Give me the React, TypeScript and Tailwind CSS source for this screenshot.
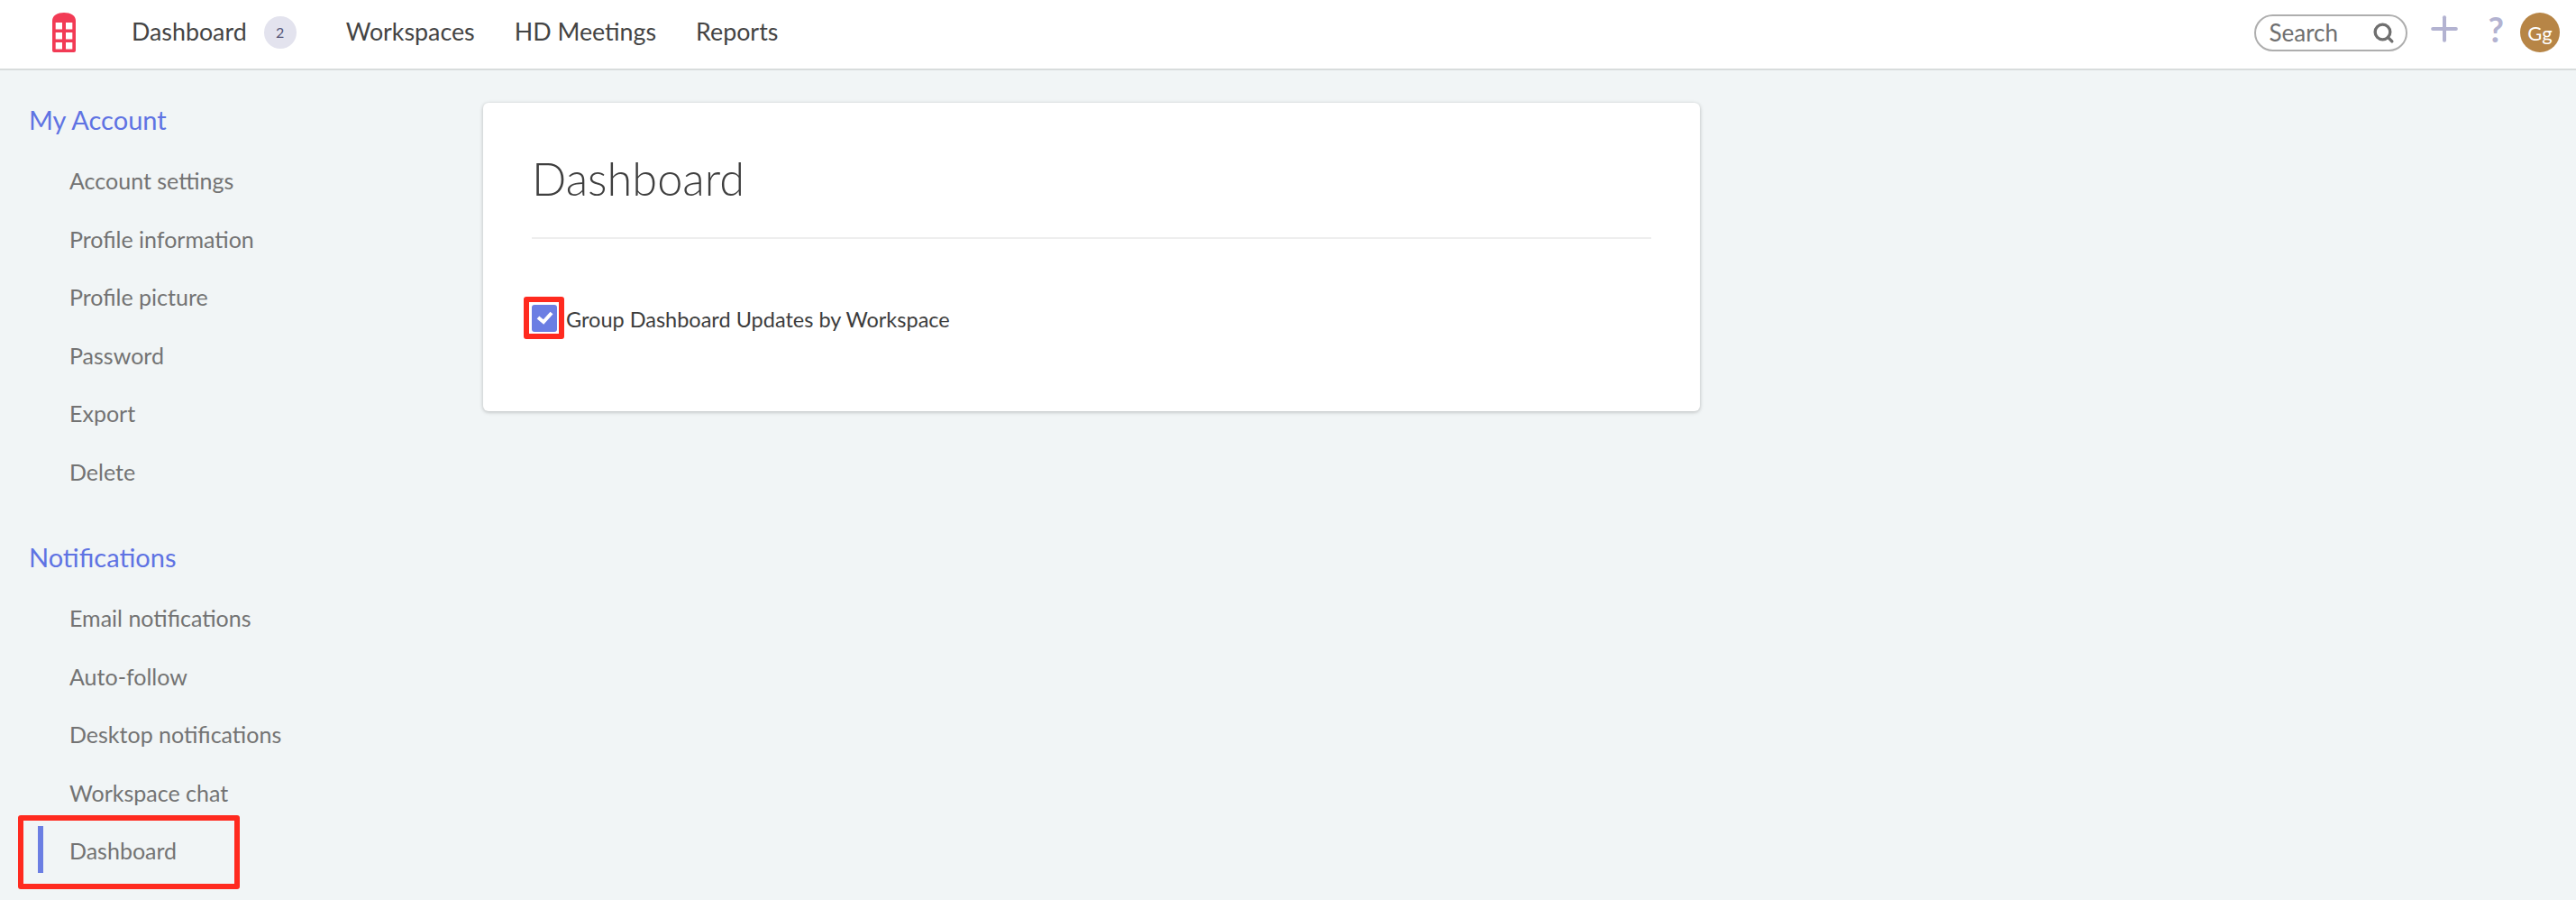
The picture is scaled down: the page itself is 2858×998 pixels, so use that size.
import { Plus, Search } from 'lucide-react';

const sections = [
  {
    title: 'My Account',
    items: ['Account settings', 'Profile information', 'Profile picture', 'Password', 'Export', 'Delete'],
  },
  {
    title: 'Notifications',
    items: ['Email notifications', 'Auto-follow', 'Desktop notifications', 'Workspace chat', 'Dashboard'],
  },
];

// Lato's discretionary set also joins "ct" and "ch", which the design doesn't do
const ligatureClass = (text: string) => (/c[th]/.test(text) ? '' : "[font-feature-settings:'dlig']");

function Logo() {
  return (
    <svg width="26" height="44" viewBox="0 0 26 44" className="block">
      <path d="M0 9C0 3 6 0 13 0s13 3 13 9v33a2 2 0 0 1-2 2H2a2 2 0 0 1-2-2Z" fill="#f23b55" />
      <g fill="#fff">
        <rect x="3.7" y="11" width="7.3" height="7.5" />
        <rect x="15" y="11" width="7.3" height="7.5" />
        <rect x="3.7" y="22" width="7.3" height="7.5" />
        <rect x="15" y="22" width="7.3" height="7.5" />
        <rect x="3.7" y="33" width="7.3" height="7.5" />
        <rect x="15" y="33" width="7.3" height="7.5" />
      </g>
    </svg>
  );
}

function TopBar() {
  return (
    <header className="flex h-[78px] items-center border-b-2 border-[#d8dcdc] bg-white pb-1 text-[26.8px] text-[#444]">
      <div className="ml-[58px] w-[88px]">
        <Logo />
      </div>
      <nav className="flex items-center">
        <span className="-translate-y-[1px]">Dashboard</span>
        <span className="ml-[19px] flex h-9 w-9 items-center justify-center rounded-full bg-[#e3e3ee] text-base text-[#555577]">
          2
        </span>
        <span className="ml-[55px] -translate-y-[1px]">Workspaces</span>
        <span className="ml-[44px] -translate-y-[1px] [font-feature-settings:'dlig']">HD Meetings</span>
        <span className="ml-[44px] -translate-y-[1px]">Reports</span>
      </nav>
      <div className="ml-auto flex items-center pr-[18px]">
        <div className="flex h-[41px] w-[170px] items-center justify-between rounded-full border-2 border-[#aeaeae] pl-[15px] pr-[12px] text-[26px] text-[#6f6f6f]">
          <span>Search</span>
          <Search size={25} strokeWidth={3.2} className="text-[#6f6f6f]" />
        </div>
        <Plus size={44} strokeWidth={2.2} className="ml-[19px] -translate-y-1 text-[#b3b3d1]" />
        <span className="ml-[27px] -translate-y-1 text-[38px] font-bold leading-none text-[#b3b3d1]">?</span>
        <div className="ml-[18px] flex h-11 w-11 items-center justify-center rounded-full bg-[#b78546] text-[22px] text-white">
          Gg
        </div>
      </div>
    </header>
  );
}

function Sidebar() {
  return (
    <aside className="w-[536px] shrink-0 pt-[32px]">
      {sections.map((section) => (
        <section key={section.title} className="mb-[40px]">
          <h2 className="pl-8 text-[29px] leading-[46px] text-[#5f73e3]">{section.title}</h2>
          <ul className="mt-[12px]">
            {section.items.map((item) => {
              const active = section.title === 'Notifications' && item === 'Dashboard';
              return (
                <li
                  key={item}
                  className={`relative h-[64.5px] pl-[77px] text-[25px] leading-[64.5px] text-[#737373] ${ligatureClass(item)}`}
                >
                  {active && (
                    <>
                      <span className="absolute left-[42px] top-[5px] h-[52px] w-[6px] bg-[#6b7ee3]" />
                      <span className="absolute left-[20px] top-[-7px] h-[82px] w-[246px] rounded-[3px] border-[6px] border-[#ff2a1f]" />
                    </>
                  )}
                  {item}
                </li>
              );
            })}
          </ul>
        </section>
      ))}
    </aside>
  );
}

function Card() {
  return (
    <main className="pt-9">
      <div className="h-[342px] w-[1350px] rounded-md bg-white px-[54px] shadow-[0_1px_4px_rgba(0,0,0,0.25)]">
        <h1 className="h-[151px] border-b-2 border-[#eeeeee] pt-[54px] text-[50.5px] font-light leading-[60px] text-[#3f3f3f]">
          Dashboard
        </h1>
        <div className="mt-[64px] flex items-center text-[23.5px] text-[#3c3c3c]">
          <div className="relative -ml-[9px] flex h-[47px] w-[45px] items-center justify-center">
            <span className="absolute inset-0 rounded-[3px] border-[6px] border-[#ff2a1f]" />
            <span className="flex h-[30px] w-[28px] items-center justify-center rounded-[3px] bg-[#6b7ee3]">
              <svg width="20" height="18" viewBox="0 0 20 18">
                <path d="M3 8 9 13 18 3" fill="none" stroke="#fff" strokeWidth="4" />
              </svg>
            </span>
          </div>
          <span className="ml-[2px] mt-[5px]">Group Dashboard Updates by Workspace</span>
        </div>
      </div>
    </main>
  );
}

export default function App() {
  return (
    <div className="h-[998px] overflow-hidden bg-[#f1f5f6] font-['Lato',sans-serif]">
      <TopBar />
      <div className="flex">
        <Sidebar />
        <Card />
      </div>
    </div>
  );
}
